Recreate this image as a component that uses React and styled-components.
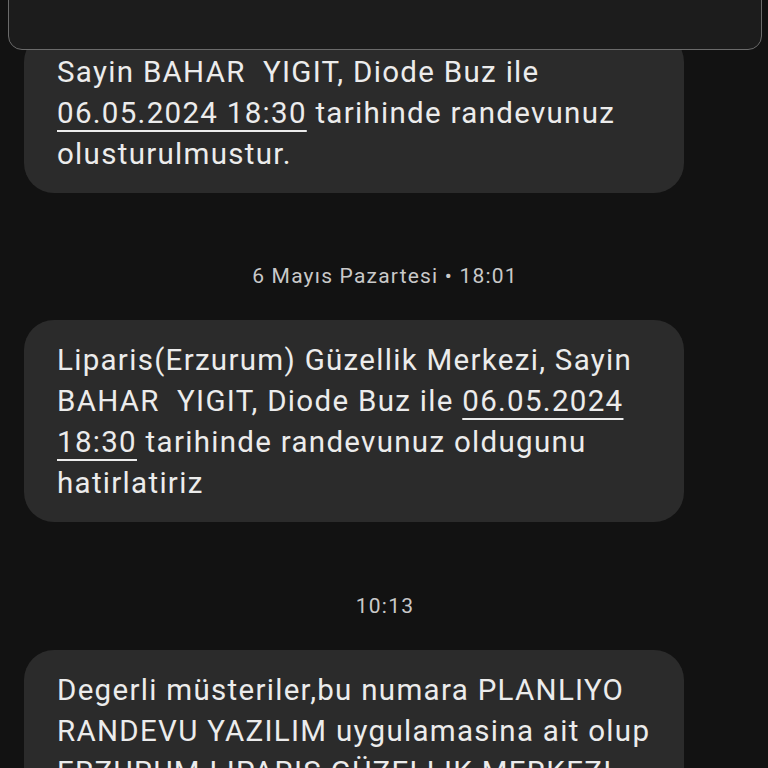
import React from "react";
import styled, { createGlobalStyle } from "styled-components";

const Global = createGlobalStyle`
  html, body { margin: 0; padding: 0; background: #121212; }
  body { width: 768px; height: 768px; overflow: hidden; font-family: Roboto, "Noto Sans", "Liberation Sans", sans-serif; }
`;

const Screen = styled.div`
  position: relative;
  width: 768px;
  height: 768px;
  overflow: hidden;
  background: #121212;
`;

const TopSheet = styled.div`
  position: absolute;
  left: 8px;
  right: 6px;
  top: -30px;
  height: 78px;
  background: #1c1c1c;
  border: 1.5px solid #6a6a6a;
  border-radius: 14px;
  z-index: 2;
`;

const Thread = styled.div`
  display: flex;
  flex-direction: column;
  align-items: flex-start;
  padding: 32px 0 0 24px;
`;

const Bubble = styled.div`
  box-sizing: border-box;
  width: 660px;
  padding: 20px 26px 18px 33px;
  background: #2b2b2b;
  border-radius: 30px;
  color: #ececec;
  font-size: 29.5px;
  line-height: 41px;
  letter-spacing: 1.3px;
`;

const Link = styled.span`
  text-decoration: underline;
  text-decoration-thickness: 2px;
  text-underline-offset: 7px;
`;

const Stamp = styled.div`
  align-self: stretch;
  padding-right: 22px;
  margin: ${(p) => p.$top}px 0 30px;
  text-align: center;
  color: #c9c9c9;
  font-size: 21px;
  line-height: 28px;
  letter-spacing: 1.2px;
`;

export default function App() {
  return (
    <Screen>
      <Global />
      <TopSheet />
      <Thread>
        <Bubble>
          Sayin BAHAR&nbsp; YIGIT, Diode Buz ile <Link>06.05.2024 18:30</Link> tarihinde randevunuz olusturulmustur.
        </Bubble>
        <Stamp $top={69}>6 Mayıs Pazartesi • 18:01</Stamp>
        <Bubble>
          Liparis(Erzurum) Güzellik Merkezi, Sayin BAHAR&nbsp; YIGIT, Diode Buz ile <Link>06.05.2024</Link> <Link>18:30</Link> tarihinde randevunuz oldugunu hatirlatiriz
        </Bubble>
        <Stamp $top={70}>10:13</Stamp>
        <Bubble>
          Degerli müsteriler,bu numara PLANLIYO RANDEVU YAZILIM uygulamasina ait olup ERZURUM LIPARIS GÜZELLIK MERKEZI tarafindan kullanilmaktadir.
        </Bubble>
      </Thread>
    </Screen>
  );
}
